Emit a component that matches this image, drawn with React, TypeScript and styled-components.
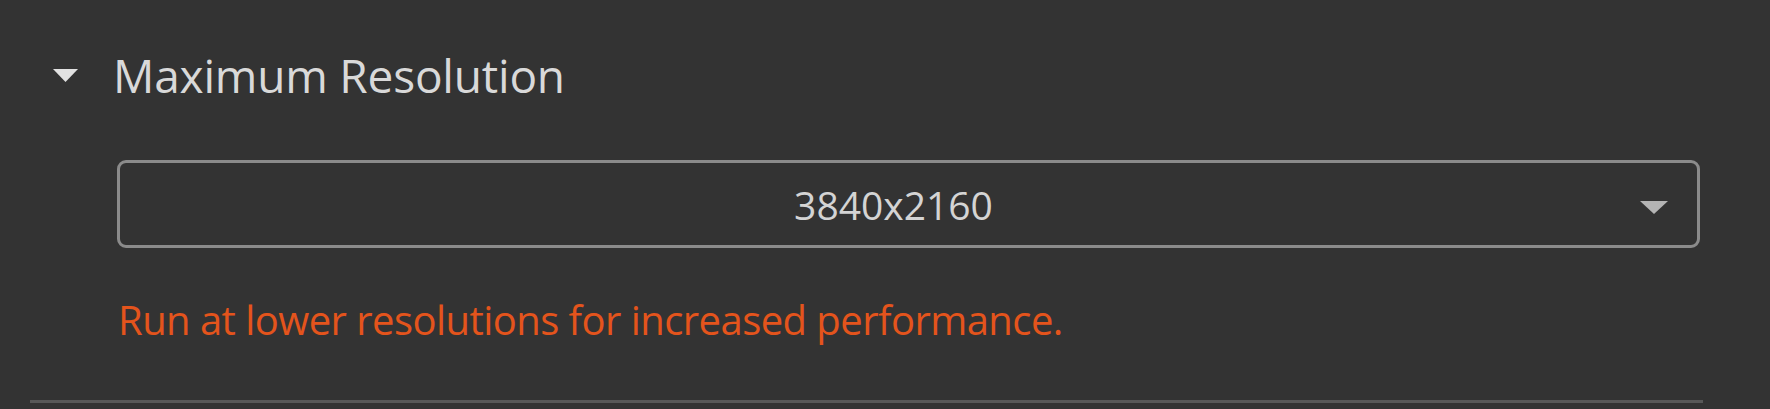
import React from 'react';
import styled, { createGlobalStyle } from 'styled-components';

const GlobalStyle = createGlobalStyle`
  html, body {
    margin: 0;
    padding: 0;
    background: #333333;
  }
  body {
    font-family: 'Open Sans', 'Noto Sans', sans-serif;
    -webkit-font-smoothing: antialiased;
  }
`;

const Panel = styled.section`
  width: 1770px;
  height: 409px;
  box-sizing: border-box;
  background: #333333;
  padding: 52px 0 0 30px;
  display: flex;
  flex-direction: column;
  overflow: hidden;
`;

const SectionHeader = styled.div`
  display: flex;
  align-items: center;
  gap: 34px;
  padding-left: 22px;
  cursor: pointer;
`;

const Caret = styled.svg`
  width: 27px;
  height: 15px;
  flex: none;
  fill: #e2e2e2;
`;

const Title = styled.h2`
  margin: 0;
  font-size: 46px;
  line-height: 1;
  font-weight: 400;
  color: #d9d9d9;
  letter-spacing: -0.2px;
`;

const Body = styled.div`
  padding-left: 87px;
  display: flex;
  flex-direction: column;
`;

const Select = styled.div`
  margin-top: 62px;
  width: 1583px;
  height: 88px;
  box-sizing: border-box;
  border: 3px solid #8b8b8b;
  border-radius: 9px;
  display: flex;
  align-items: center;
  position: relative;
  padding-right: 30px;
`;

const SelectValue = styled.span`
  flex: 1;
  text-align: center;
  font-size: 39px;
  line-height: 1;
  color: #d4d4d4;
`;

const SelectArrow = styled.svg`
  position: absolute;
  right: 28px;
  top: 37px;
  width: 30px;
  height: 15px;
  fill: #b4b4b4;
`;

const Hint = styled.p`
  margin: 52px 0 0 1px;
  font-size: 40px;
  line-height: 1;
  color: #e4541c;
  letter-spacing: -0.55px;
`;

const Divider = styled.hr`
  margin: auto 0 6px 0;
  width: 1673px;
  height: 3px;
  border: none;
  background: #585858;
`;

export default function App() {
  return (
    <>
      <GlobalStyle />
      <Panel>
        <SectionHeader>
          <Caret viewBox="0 0 27 15">
            <path d="M1 1 H26 L13.5 14 Z" />
          </Caret>
          <Title>Maximum Resolution</Title>
        </SectionHeader>
        <Body>
          <Select>
            <SelectValue>3840x2160</SelectValue>
            <SelectArrow viewBox="0 0 30 15">
              <path d="M1 1 H29 L15 14 Z" />
            </SelectArrow>
          </Select>
          <Hint>Run at lower resolutions for increased performance.</Hint>
        </Body>
        <Divider />
      </Panel>
    </>
  );
}
